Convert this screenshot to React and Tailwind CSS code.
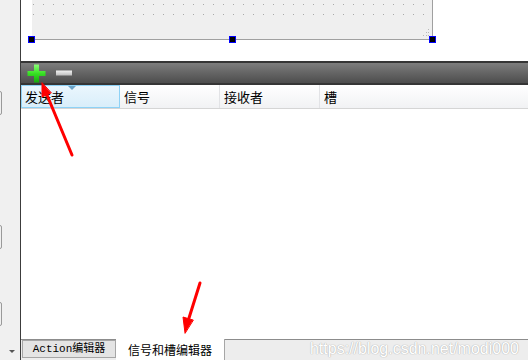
import React from 'react';

const font = { fontFamily: '"Noto Sans CJK SC", "Liberation Sans", sans-serif' };

function Handle({ className }) {
  return (
    <div className={`absolute w-[7px] h-[7px] bg-black border border-[#0000ff] ${className}`} />
  );
}

function GridCanvas() {
  const dots = [];
  for (let r = 0; r < 2; r++) {
    for (let c = 0; c < 40; c++) {
      dots.push(
        <rect key={`${r}-${c}`} x={1 + c * 10} y={4 + r * 10} width="1" height="1" fill="#a8a8a8" />
      );
    }
  }
  return (
    <div className="relative ml-[11px] w-[401px] h-[40px] bg-[#efefef] border-r border-b border-[#a0a0a0]">
      <svg className="absolute inset-0" width="400" height="39">
        {dots}
        <g fill="#b8b8b8">
          <rect x="396" y="29" width="1" height="1" />
          <rect x="394" y="32" width="1" height="1" />
          <rect x="396" y="32" width="1" height="1" />
          <rect x="391" y="35" width="1" height="1" />
          <rect x="394" y="35" width="1" height="1" />
          <rect x="396" y="35" width="1" height="1" />
        </g>
      </svg>
      <Handle className="left-[-4px] bottom-[-4px]" />
      <Handle className="left-[197px] bottom-[-4px]" />
      <Handle className="right-[-4px] bottom-[-4px]" />
    </div>
  );
}

function PlusIcon() {
  return (
    <svg width="19" height="19" viewBox="0 0 19 19">
      <defs>
        <linearGradient id="pg" x1="0" y1="0" x2="0" y2="1">
          <stop offset="0" stopColor="#8cff78" />
          <stop offset="0.5" stopColor="#38e024" />
          <stop offset="1" stopColor="#14a80c" />
        </linearGradient>
      </defs>
      <path d="M7 0.5h5v6.5h6.5v5H12v6.5H7V12H0.5V7H7z" fill="url(#pg)" />
    </svg>
  );
}

function MinusIcon() {
  return (
    <svg width="18" height="18" viewBox="0 0 18 18">
      <defs>
        <linearGradient id="mg" x1="0" y1="0" x2="0" y2="1">
          <stop offset="0" stopColor="#f2f2f2" />
          <stop offset="1" stopColor="#bdbdbd" />
        </linearGradient>
      </defs>
      <rect x="1" y="6.5" width="16" height="5" fill="url(#mg)" />
    </svg>
  );
}

const cols = ['信号', '接收者'];

export default function App() {
  return (
    <div className="relative w-[528px] h-[360px] flex bg-white overflow-hidden" style={font}>
      {/* left dock strip */}
      <div className="relative w-[21px] h-full bg-[#f0f0f0] border-r border-[#3c3c3c]">
        <div className="absolute left-[-4px] top-[91px] w-[6px] h-[24px] border border-[#9a9a9a] rounded-[2px]" />
        <div className="absolute left-[-4px] top-[225px] w-[6px] h-[24px] border border-[#9a9a9a] rounded-[2px]" />
        <div className="absolute left-[-4px] top-[302px] w-[6px] h-[24px] border border-[#9a9a9a] rounded-[2px]" />
        <div className="absolute left-[9px] top-[350px] w-0 h-0 border-l-[3px] border-r-[3px] border-t-[3px] border-l-transparent border-r-transparent border-t-[#555]" />
      </div>

      <div className="flex-1 flex flex-col">
        <div className="h-[40px] bg-white">
          <GridCanvas />
        </div>
        <div className="h-[21px] bg-white" />

        {/* toolbar */}
        <div className="h-[24px] flex items-center gap-[9px] pl-[6px] border-t-2 border-b-2 border-[#353535] bg-gradient-to-b from-[#7d7d7d] to-[#4d4d4d]">
          <PlusIcon />
          <MinusIcon />
        </div>

        {/* header */}
        <div className="h-[24px] flex text-[13px] text-black border-b border-[#d5d5d5] bg-gradient-to-b from-[#ffffff] to-[#f1f2f4]">
          <div className="relative w-[99px] flex items-center pl-[3px] bg-gradient-to-b from-[#eaf6fd] to-[#d9eefa] border border-[#8ed2f6]">
            发送者
            <div className="absolute left-[46px] top-0 w-0 h-0 border-l-[4px] border-r-[4px] border-t-[4px] border-l-transparent border-r-transparent border-t-[#6aa3c8]" />
          </div>
          {cols.map((c) => (
            <div key={c} className="w-[100px] flex items-center pl-[4px] border-r border-[#e2e3e6]">
              {c}
            </div>
          ))}
          <div className="flex-1 flex items-center pl-[4px]">槽</div>
        </div>

        <div className="flex-1 bg-white" />

        {/* bottom tabs */}
        <div className="relative h-[21px] flex items-end bg-[#ededed] border-t border-[#8c8c8c]">
          <div
            className="ml-[1px] w-[94px] h-[18px] mb-[2px] flex items-center justify-center text-[11px] bg-[#e4e4e4] border border-[#a6a6a6] text-black"
            style={{ fontFamily: '"Liberation Mono", "Noto Sans CJK SC", monospace' }}
          >
            Action编辑器
          </div>
          <div className="w-[109px] h-[21px] mt-[-1px] flex items-center justify-center text-[12px] bg-white border-r border-[#a6a6a6] text-black">
            信号和槽编辑器
          </div>
          <div
            className="absolute right-[9px] top-[-3px] text-[16px] text-white"
            style={{
              fontFamily: '"Liberation Sans", sans-serif',
              textShadow: '0 0 1px #b0b0b0, 0 0 1px #b0b0b0',
            }}
          >
            https://blog.csdn.net/modi000
          </div>
        </div>
      </div>

      {/* annotation arrows */}
      <svg className="absolute inset-0 pointer-events-none" width="528" height="360">
        <g stroke="#ff0000" strokeWidth="3" strokeLinecap="round" fill="#ff0000">
          <line x1="72" y1="155" x2="47" y2="95" />
          <polygon points="42,83 42,97 51,93" strokeWidth="1" strokeLinejoin="round" />
          <line x1="200" y1="283" x2="189" y2="318" />
          <polygon points="185,333 183,317 193,320" strokeWidth="1" strokeLinejoin="round" />
        </g>
      </svg>
    </div>
  );
}
